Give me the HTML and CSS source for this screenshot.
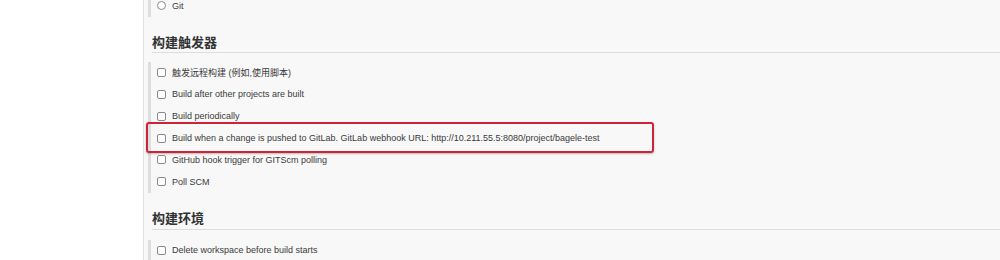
FILE: index.html
```html
<!DOCTYPE html>
<html lang="zh-CN">
<head>
    <meta charset="UTF-8">
    <title>bagele-test Config</title>
    <link rel="stylesheet" href="styles.css">
</head>
<body>
    <div class="page">
        <div class="side-panel"></div>
        <div class="main-panel">
            <div class="option-group first">
                <label class="option"><span class="radio"></span>Git</label>
            </div>

            <div class="section-header">构建触发器</div>
            <div class="option-group">
                <label class="option"><span class="checkbox"></span>触发远程构建 (例如,使用脚本)</label>
                <label class="option"><span class="checkbox"></span>Build after other projects are built</label>
                <label class="option"><span class="checkbox"></span>Build periodically</label>
                <label class="option highlight"><span class="checkbox"></span>Build when a change is pushed to GitLab. GitLab webhook URL: http://10.211.55.5:8080/project/bagele-test</label>
                <label class="option"><span class="checkbox"></span>GitHub hook trigger for GITScm polling</label>
                <label class="option"><span class="checkbox"></span>Poll SCM</label>
            </div>

            <div class="section-header env">构建环境</div>
            <div class="option-group">
                <label class="option"><span class="checkbox"></span>Delete workspace before build starts</label>
            </div>
        </div>
    </div>
</body>
</html>
```

FILE: styles.css
```css
body {
    margin: 0;
    padding: 0;
    background-color: #ffffff;
    font-family: "Liberation Sans", Arial, "Noto Sans CJK SC", sans-serif;
    color: #333333;
    overflow: hidden;
}
.page {
    display: flex;
    min-height: 100vh;
}
.side-panel {
    width: 143px;
    flex-shrink: 0;
    border-right: 1px solid #e2e2e2;
    background-color: #ffffff;
}
.main-panel {
    flex: 1;
    background-color: #f8f8f8;
    padding-left: 4px;
}
.option-group {
    border-left: 3px solid #dddddd;
    padding-left: 6px;
}
.option-group.first {
    margin-top: -5px;
}
.option {
    position: relative;
    display: flex;
    align-items: center;
    height: 21.8px;
    font-size: 9px;
    color: #3a3a3a;
    white-space: nowrap;
}
.checkbox,
.radio {
    width: 7px;
    height: 7px;
    border: 1px solid #8a8a8a;
    border-radius: 2px;
    background-color: #ffffff;
    margin-right: 6px;
    flex-shrink: 0;
}
.radio {
    border-radius: 50%;
}
.option.highlight::after {
    content: "";
    position: absolute;
    top: -5px;
    bottom: -4px;
    left: -11px;
    width: 504px;
    border: 2px solid #cf2338;
    border-radius: 3px;
    box-shadow: 0 1px 2px rgba(0, 0, 0, 0.25);
    pointer-events: none;
}
.section-header {
    margin: 16px 0 9px 4px;
    font-family: "Noto Sans CJK SC", sans-serif;
    font-size: 13px;
    font-weight: 700;
    line-height: 18px;
    padding-bottom: 1px;
    color: #333333;
    border-bottom: 1px solid #dddddd;
}
.section-header.env {
    padding-bottom: 2px;
    margin-bottom: 10px;
}
```
